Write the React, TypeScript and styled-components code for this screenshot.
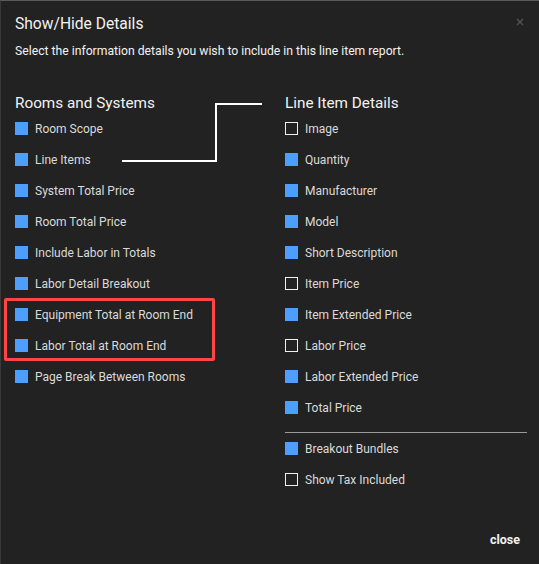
import React from "react";
import styled, { createGlobalStyle } from "styled-components";

const Global = createGlobalStyle`
  html, body { margin: 0; padding: 0; background: #222222; }
  * { box-sizing: border-box; }
`;

const Modal = styled.div`
  position: relative;
  width: 539px;
  height: 564px;
  background: #222222;
  border-top: 1px solid #5a5a5a;
  border-left: 1px solid #3a3a3a;
  font-family: Roboto, "Liberation Sans", sans-serif;
  color: #e6e6e6;
  padding: 12px 0 0 14px;
  display: flex;
  flex-direction: column;
`;

const Title = styled.h1`
  margin: 0;
  font-size: 15.6px;
  line-height: 22px;
  font-weight: 400;
  color: #f2f2f2;
`;

const Subtitle = styled.p`
  margin: 8px 0 0;
  font-size: 12.2px;
  line-height: 16px;
  color: #f2f2f2;
`;

const CloseX = styled.button`
  position: absolute;
  top: 16px;
  right: 14px;
  width: 10px;
  height: 10px;
  padding: 0;
  border: none;
  background: transparent;
  display: flex;
`;

const Body = styled.div`
  position: relative;
  margin-top: 34px;
  display: grid;
  grid-template-columns: 270px 242px;
`;

const Column = styled.div`
  display: flex;
  flex-direction: column;
`;

const Heading = styled.h2`
  margin: 0;
  font-size: 15.3px;
  line-height: 20px;
  font-weight: 400;
  color: #f2f2f2;
`;

const Row = styled.label`
  display: flex;
  align-items: center;
  gap: 7px;
  height: 31px;
  font-size: 12px;
  color: #dadada;
`;

const Box = styled.span<{ $checked: boolean }>`
  width: 13px;
  height: 13px;
  flex: none;
  background: ${(p) => (p.$checked ? "#4d9fff" : "transparent")};
  border: ${(p) => (p.$checked ? "none" : "1.5px solid #f0f0f0")};
`;

const Highlight = styled.div`
  position: relative;
  &::after {
    content: "";
    position: absolute;
    top: -1px;
    bottom: 0;
    left: -11px;
    width: 205px;
    border: 3px solid #ff4646;
    border-radius: 2px;
    pointer-events: none;
  }
`;

const Divider = styled.hr`
  margin: 9px 0 0;
  border: none;
  border-top: 1px solid #9a9a9a;
  width: 242px;
`;

const Connector = styled.svg`
  position: absolute;
  left: -15px;
  top: -27px;
  pointer-events: none;
`;

const Footer = styled.div`
  margin-top: auto;
  display: flex;
  justify-content: flex-end;
  padding: 0 19px 17px 0;
`;

const CloseButton = styled.button`
  border: none;
  background: transparent;
  color: #f2f2f2;
  font-family: Roboto, "Liberation Sans", sans-serif;
  font-weight: 700;
  font-size: 12.5px;
  padding: 0;
`;

type Item = { label: string; checked: boolean };

const left: Item[] = [
  { label: "Room Scope", checked: true },
  { label: "Line Items", checked: true },
  { label: "System Total Price", checked: true },
  { label: "Room Total Price", checked: true },
  { label: "Include Labor in Totals", checked: true },
  { label: "Labor Detail Breakout", checked: true },
];
const highlighted: Item[] = [
  { label: "Equipment Total at Room End", checked: true },
  { label: "Labor Total at Room End", checked: true },
];
const leftEnd: Item[] = [{ label: "Page Break Between Rooms", checked: true }];

const right: Item[] = [
  { label: "Image", checked: false },
  { label: "Quantity", checked: true },
  { label: "Manufacturer", checked: true },
  { label: "Model", checked: true },
  { label: "Short Description", checked: true },
  { label: "Item Price", checked: false },
  { label: "Item Extended Price", checked: true },
  { label: "Labor Price", checked: false },
  { label: "Labor Extended Price", checked: true },
  { label: "Total Price", checked: true },
];
const rightEnd: Item[] = [
  { label: "Breakout Bundles", checked: true },
  { label: "Show Tax Included", checked: false },
];

const Rows = ({ items }: { items: Item[] }) => (
  <>
    {items.map((i) => (
      <Row key={i.label}>
        <Box $checked={i.checked} />
        {i.label}
      </Row>
    ))}
  </>
);

export default function App() {
  return (
    <>
      <Global />
      <Modal>
        <Title>Show/Hide Details</Title>
        <Subtitle>
          Select the information details you wish to include in this line item report.
        </Subtitle>
        <CloseX aria-label="close">
          <svg width="10" height="10" viewBox="0 0 10 10">
            <path d="M2 2 L8 8 M8 2 L2 8" stroke="#555" strokeWidth="1.3" />
          </svg>
        </CloseX>
        <Body>
          <Column>
            <Heading>Rooms and Systems</Heading>
            <Rows items={left} />
            <Highlight>
              <Rows items={highlighted} />
            </Highlight>
            <Rows items={leftEnd} />
          </Column>
          <Column>
            <Heading>Line Item Details</Heading>
            <Rows items={right} />
            <Divider />
            <Rows items={rightEnd} />
          </Column>
          <Connector width="280" height="100" viewBox="0 0 280 100">
            <path
              d="M122 95 H216 V38 H262"
              fill="none"
              stroke="#ffffff"
              strokeWidth="2"
            />
          </Connector>
        </Body>
        <Footer>
          <CloseButton>close</CloseButton>
        </Footer>
      </Modal>
    </>
  );
}
